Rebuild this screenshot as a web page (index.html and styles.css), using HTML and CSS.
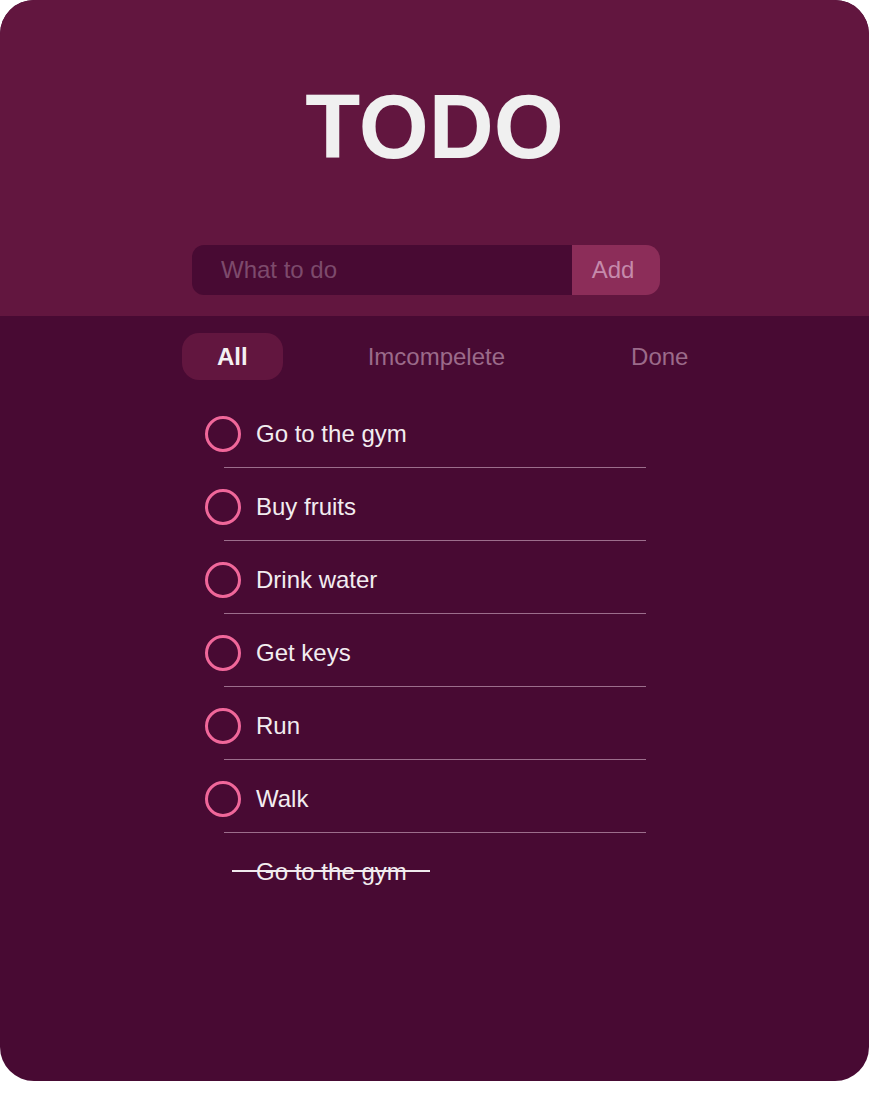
FILE: index.html
```html
<!DOCTYPE html>
<html lang="en">
<head>
<meta charset="utf-8">
<title>TODO</title>
<link rel="stylesheet" href="styles.css">
</head>
<body>
<div class="card">
  <header class="header">
    <h1 class="title">TODO</h1>
    <form class="add-form">
      <input class="add-input" type="text" placeholder="What to do">
      <button class="add-btn" type="button">Add</button>
    </form>
  </header>
  <main class="main">
    <nav class="tabs">
      <span class="tab tab-active">All</span>
      <span class="tab tab-mid">Imcompelete</span>
      <span class="tab">Done</span>
    </nav>
    <ul class="list">
      <li class="item"><div class="row"><span class="check"></span><span class="label">Go to the gym</span></div><div class="divider"></div></li>
      <li class="item"><div class="row"><span class="check"></span><span class="label">Buy fruits</span></div><div class="divider"></div></li>
      <li class="item"><div class="row"><span class="check"></span><span class="label">Drink water</span></div><div class="divider"></div></li>
      <li class="item"><div class="row"><span class="check"></span><span class="label">Get keys</span></div><div class="divider"></div></li>
      <li class="item"><div class="row"><span class="check"></span><span class="label">Run</span></div><div class="divider"></div></li>
      <li class="item"><div class="row"><span class="check"></span><span class="label">Walk</span></div><div class="divider"></div></li>
      <li class="item item-done"><div class="row"><span class="label label-done">Go to the gym</span></div></li>
    </ul>
  </main>
</div>
</body>
</html>
```
FILE: styles.css
```css
html, body {
  margin: 0;
  padding: 0;
  background: #ffffff;
}
body {
  font-family: "Liberation Sans", Arial, Helvetica, sans-serif;
}
.card {
  width: 869px;
  height: 1081px;
  border-radius: 34px;
  overflow: hidden;
  background: #480a33;
  display: flex;
  flex-direction: column;
}
.header {
  background: #62163f;
  height: 316px;
  box-sizing: border-box;
  padding-top: 82px;
}
.title {
  margin: 0;
  text-align: center;
  font-size: 90px;
  line-height: 90px;
  font-weight: 700;
  color: #f0f0f0;
  letter-spacing: 0;
}
.add-form {
  margin: 73px 0 0 192px;
  width: 468px;
  height: 50px;
  display: flex;
}
.add-input {
  flex: 1;
  border: none;
  outline: none;
  margin: 0;
  height: 50px;
  box-sizing: border-box;
  padding: 0 0 0 29px;
  background: #480a33;
  border-radius: 12px 0 0 12px;
  font-family: inherit;
  font-size: 24px;
  color: #f0f0f0;
}
.add-input::placeholder {
  color: #7d4a6c;
}
.add-btn {
  width: 88px;
  height: 50px;
  border: none;
  margin: 0;
  padding: 0 6px 0 0;
  background: #8c2d59;
  border-radius: 0 14px 14px 0;
  font-family: inherit;
  font-size: 24px;
  color: #c58aab;
  text-align: center;
}
.main {
  flex: 1;
}
.tabs {
  display: flex;
  margin: 17px 0 0 182px;
}
.tab {
  height: 47px;
  line-height: 47px;
  padding: 0 35px;
  border-radius: 17px;
  font-size: 24px;
  color: #9b6b8a;
}
.tab-mid {
  margin: 0 56px 0 50px;
}
.tab-active {
  background: #62163f;
  color: #f4f0f2;
  font-weight: 700;
}
.list {
  list-style: none;
  margin: 36px 0 0 205px;
  padding: 0;
}
.item {
  margin-bottom: 21px;
}
.row {
  display: flex;
  align-items: center;
  gap: 15px;
  height: 36px;
}
.check {
  width: 36px;
  height: 36px;
  box-sizing: border-box;
  border: 3px solid #f0679a;
  border-radius: 50%;
}
.label {
  font-size: 24px;
  color: #f2edf0;
}
.divider {
  margin: 15px 0 0 19px;
  width: 422px;
  height: 1px;
  background: #9c6e8c;
}
.item-done .row {
  padding-left: 27px;
}
.label-done {
  padding: 0 23px 0 24px;
  background: linear-gradient(#f0eaee, #f0eaee) no-repeat left 46% / 100% 2px;
}
```
